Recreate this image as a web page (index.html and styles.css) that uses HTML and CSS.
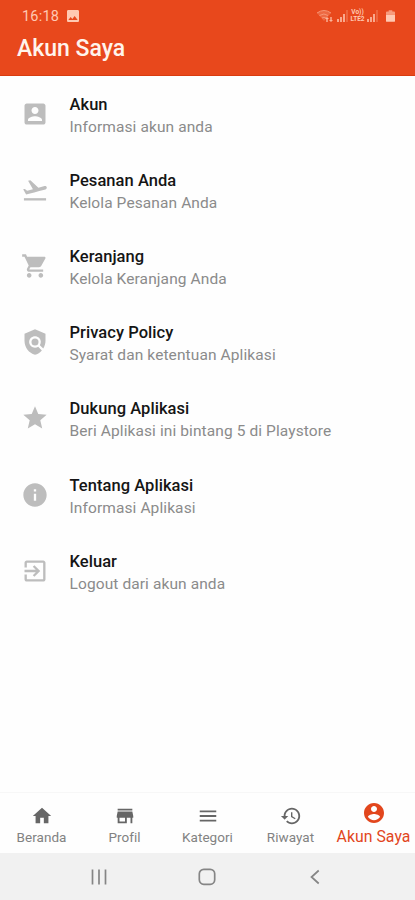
FILE: index.html
```html
<!DOCTYPE html>
<html lang="id">
<head>
<meta charset="utf-8">
<meta name="viewport" content="width=device-width, initial-scale=1">
<title>Akun Saya</title>
<link rel="stylesheet" href="styles.css">
</head>
<body>
<div class="screen">
  <header class="header">
    <div class="status">
      <span class="time">16:18</span>
      <svg class="picture" viewBox="3 3 18 18"><path d="M21 19V5c0-1.100-.9-2-2-2H5c-1.100 0-2 .9-2 2v14c0 1.100.9 2 2 2h14c1.100 0 2-.9 2-2zM8.500 13.500l2.500 3.010L14.500 12l4.500 6H5l3.500-4.500z"/></svg>
      <div class="signals">
        <svg class="wifi" viewBox="0 0 18 14"><path class="faint" d="M1 4Q8 -1 15 4L8 12Z"/><path class="arc" d="M1 4Q8 -1 15 4M3.500 6.500Q8 3.500 12 6.500M6 9Q8 7.500 10 9"/><path d="M11 8l2 2h-1.300v3h-1.400v-3H9zM15 13l-2-2h1.300V8h1.400v3H17z"/></svg>
        <svg class="bars" viewBox="0 0 12 12"><path d="M0 9h2v3H0zM3 7h2v5H3zM6 4h2v8H6z"/><path class="faint" d="M9 0h2v12H9z"/></svg>
        <span class="lte"><span>Vo))</span><span>LTE2</span></span>
        <svg class="bars" viewBox="0 0 12 12"><path d="M0 9h2v3H0zM3 7h2v5H3zM6 4h2v8H6z"/><path class="faint" d="M9 0h2v12H9z"/></svg>
        <svg class="battery" viewBox="0 0 10 13"><path class="half" d="M3 0h4v1.500h2q1 0 1 1V5H0V2.500q0-1 1-1h2z"/><path d="M0 5h10v7q0 1-1 1H1q-1 0-1-1z"/></svg>
      </div>
    </div>
    <h1>Akun Saya</h1>
  </header>

  <main class="menu">
    <div class="item">
      <svg viewBox="0 0 24 24"><path d="M3 5v14c0 1.100.89 2 2 2h14c1.100 0 2-.9 2-2V5c0-1.100-.9-2-2-2H5c-1.110 0-2 .9-2 2zm12 4c0 1.660-1.340 3-3 3s-3-1.340-3-3 1.340-3 3-3 3 1.340 3 3zm-9 8c0-2 4-3.100 6-3.100s6 1.100 6 3.100v1H6v-1z"/></svg>
      <div><h2>Akun</h2><p>Informasi akun anda</p></div>
    </div>
    <div class="item">
      <svg viewBox="0 0 24 24"><path d="M2.500 19h19v2h-19z"/><path d="M22.070 9.640c-.21-.8-1.040-1.280-1.840-1.060L14.920 10l-6.900-6.430-1.930.51 4.140 7.170-4.970 1.330-1.970-1.540-1.450.39 1.820 3.160.77 1.330 1.600-.43 5.310-1.420 4.350-1.160L21 11.490c.81-.23 1.280-1.050 1.070-1.850z"/></svg>
      <div><h2>Pesanan Anda</h2><p>Kelola Pesanan Anda</p></div>
    </div>
    <div class="item">
      <svg viewBox="0 0 24 24"><path d="M7 18c-1.100 0-1.990.9-1.990 2S5.900 22 7 22s2-.9 2-2-.9-2-2-2zM1 2v2h2l3.600 7.590-1.350 2.450c-.16.28-.25.61-.25.960 0 1.100.9 2 2 2h12v-2H7.420c-.14 0-.25-.11-.25-.25l.03-.12.900-1.630h7.450c.75 0 1.410-.41 1.750-1.030l3.580-6.490c.08-.14.120-.31.120-.48 0-.55-.45-1-1-1H5.210l-.94-2H1zm16 16c-1.100 0-1.990.9-1.990 2s.89 2 1.990 2 2-.9 2-2-.9-2-2-2z"/></svg>
      <div><h2>Keranjang</h2><p>Kelola Keranjang Anda</p></div>
    </div>
    <div class="item">
      <svg viewBox="0 0 24 24"><path d="M21 5l-9-4-9 4v6c0 5.550 3.840 10.740 9 12 2.300-.56 4.330-1.900 5.880-3.710l-3.120-3.120c-1.940 1.290-4.580 1.070-6.290-.64-1.950-1.950-1.950-5.120 0-7.070 1.950-1.950 5.120-1.950 7.070 0 1.710 1.710 1.920 4.350.64 6.290l2.900 2.900C20.290 15.690 21 13.380 21 11V5z"/><circle cx="12" cy="12" r="3"/></svg>
      <div><h2>Privacy Policy</h2><p>Syarat dan ketentuan Aplikasi</p></div>
    </div>
    <div class="item">
      <svg viewBox="0 0 24 24"><path d="M12 17.270L18.180 21l-1.640-7.030L22 9.240l-7.190-.61L12 2 9.190 8.630 2 9.240l5.460 4.730L5.820 21z"/></svg>
      <div><h2>Dukung Aplikasi</h2><p>Beri Aplikasi ini bintang 5 di Playstore</p></div>
    </div>
    <div class="item">
      <svg viewBox="0 0 24 24"><path d="M12 2C6.480 2 2 6.480 2 12s4.480 10 10 10 10-4.480 10-10S17.520 2 12 2zm1 15h-2v-6h2v6zm0-8h-2V7h2v2z"/></svg>
      <div><h2>Tentang Aplikasi</h2><p>Informasi Aplikasi</p></div>
    </div>
    <div class="item">
      <svg viewBox="0 0 24 24"><path d="M10.090 15.590L11.500 17l5-5-5-5-1.410 1.410L12.670 11H3v2h9.670l-2.580 2.590zM19 3H5c-1.110 0-2 .9-2 2v4h2V5h14v14H5v-4H3v4c0 1.100.89 2 2 2h14c1.100 0 2-.9 2-2V5c0-1.100-.9-2-2-2z"/></svg>
      <div><h2>Keluar</h2><p>Logout dari akun anda</p></div>
    </div>
  </main>

  <nav class="tabs">
    <div class="tab">
      <svg viewBox="0 0 24 24"><path d="M10 20v-6h4v6h5v-8h3L12 3 2 12h3v8z"/></svg>
      <span>Beranda</span>
    </div>
    <div class="tab">
      <svg viewBox="0 0 24 24"><path d="M20 4H4v2h16V4zm1 10v-2l-1-5H4l-1 5v2h1v6h10v-6h4v6h2v-6h1zm-9 4H6v-4h6v4z"/></svg>
      <span>Profil</span>
    </div>
    <div class="tab">
      <svg viewBox="0 0 24 24"><path d="M3 18h18v-2H3v2zm0-5h18v-2H3v2zm0-7v2h18V6H3z"/></svg>
      <span>Kategori</span>
    </div>
    <div class="tab">
      <svg viewBox="0 0 24 24"><path d="M13 3c-4.970 0-9 4.030-9 9H1l3.890 3.890.07.14L9 12H6c0-3.870 3.130-7 7-7s7 3.130 7 7-3.130 7-7 7c-1.930 0-3.680-.79-4.940-2.060l-1.420 1.420C8.270 19.990 10.510 21 13 21c4.970 0 9-4.030 9-9s-4.030-9-9-9zm-1 5v5l4.280 2.540.72-1.210-3.500-2.080V8H12z"/></svg>
      <span>Riwayat</span>
    </div>
    <div class="tab active">
      <svg viewBox="0 0 24 24"><path d="M12 2C6.480 2 2 6.480 2 12s4.480 10 10 10 10-4.480 10-10S17.520 2 12 2zm0 3c1.660 0 3 1.340 3 3s-1.340 3-3 3-3-1.340-3-3 1.340-3 3-3zm0 14.200c-2.500 0-4.710-1.280-6-3.220.03-1.990 4-3.080 6-3.080 1.990 0 5.970 1.090 6 3.080-1.290 1.940-3.500 3.220-6 3.220z"/></svg>
      <span>Akun Saya</span>
    </div>
  </nav>

  <footer class="system">
    <svg viewBox="0 0 18 18"><path d="M2.500 1.500v15M9 1.500v15M15.500 1.500v15"/></svg>
    <svg viewBox="0 0 18 18"><rect x="1.300" y="1.300" width="15.400" height="15" rx="4.500"/></svg>
    <svg viewBox="0 0 18 18"><path d="M12.700 2.500L5.500 9l7.200 6.500"/></svg>
  </footer>
</div>
</body>
</html>
```
FILE: styles.css
```css
* { box-sizing: border-box; }

body {
  margin: 0;
  font-family: Roboto, "Liberation Sans", sans-serif;
  background: #fefefe;
}

h1, h2, p { margin: 0; }
svg { display: block; flex: none; }

.screen {
  display: flex;
  flex-direction: column;
  width: 415px;
  height: 900px;
  overflow: hidden;
}

.header {
  height: 76px;
  flex: none;
  background: #e8481c;
  border-bottom: 1px solid #d93c10;
  color: #fff4ec;
}

.status {
  display: flex;
  align-items: center;
  height: 32px;
  padding: 0 20px 0 22px;
  color: #ffc9b2;
  fill: #ffc9b2;
}

.time { font-size: 14.500px; letter-spacing: 0.2px; }
.picture { width: 12px; height: 12px; margin-left: 8px; }

.signals {
  display: flex;
  align-items: center;
  margin-left: auto;
}

.wifi { width: 18px; height: 14px; margin: 0 3px 0 0; opacity: 0.85; }
.arc { fill: none; stroke: #f9a486; stroke-width: 1; }
.faint { opacity: 0.3; }
.half { opacity: 0.65; }
.bars { width: 12px; height: 12px; opacity: 0.75; }

.lte {
  display: flex;
  flex-direction: column;
  align-items: center;
  width: 17px;
  margin-right: 1px;
  font-size: 6.500px;
  line-height: 7px;
  font-weight: 700;
}

.battery { width: 9px; height: 12px; margin-left: 7px; }

h1 {
  padding: 1px 0 0 17px;
  font-size: 23px;
  line-height: 32px;
  font-weight: 500;
}

.menu { flex: 1; }

.item {
  display: flex;
  align-items: center;
  gap: 21px;
  height: 76.2px;
  padding-left: 20.500px;
}

.item svg { width: 28px; height: 28px; margin-top: -1px; fill: #bdbdbd; }
.item div { padding-top: 3px; }

h2 {
  font-size: 16.500px;
  line-height: 22px;
  font-weight: 500;
  letter-spacing: 0.05px;
  color: #151515;
}

p {
  font-size: 15.500px;
  line-height: 22px;
  letter-spacing: 0.1px;
  color: #8b8b8b;
}

.tabs {
  display: flex;
  height: 61px;
  flex: none;
  border-top: 1px solid #f7f7f7;
  color: #828282;
  fill: #666;
}

.tab {
  flex: 1;
  display: flex;
  flex-direction: column;
  align-items: center;
  gap: 1px;
  padding-top: 12px;
  font-size: 13.500px;
  line-height: 18px;
  letter-spacing: 0.05px;
  white-space: nowrap;
}

.tab svg { width: 22px; height: 22px; }

.active {
  gap: 2px;
  padding-top: 8px;
  font-size: 15.800px;
  line-height: 20px;
  color: #e2461d;
  fill: #e2461d;
}

.active svg { width: 24px; height: 24px; }

.system {
  display: flex;
  align-items: center;
  justify-content: center;
  gap: 90px;
  height: 47px;
  padding-right: 1px;
  flex: none;
  background: #f1f1f1;
}

.system svg {
  width: 18px;
  height: 18px;
  fill: none;
  stroke: #858585;
  stroke-width: 1.700;
}
```
